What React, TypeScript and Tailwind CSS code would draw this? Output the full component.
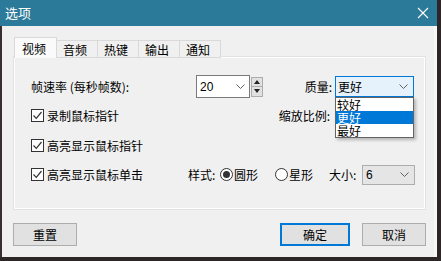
import React from 'react';

const Chevron = () => (
  <svg width="9" height="5" viewBox="0 0 9 5">
    <path d="M0.5 0.5 L4.5 4.5 L8.5 0.5" fill="none" stroke="#606060" strokeWidth="1" />
  </svg>
);

const Check: React.FC<{ label: string }> = ({ label }) => (
  <div className="flex items-center">
    <span className="w-[13px] h-[13px] border border-[#333333] bg-white flex items-center justify-center">
      <svg width="11" height="11" viewBox="0 0 11 11">
        <path d="M1.5 5.5 L4.3 8.3 L9.5 2" fill="none" stroke="#333333" strokeWidth="1.2" />
      </svg>
    </span>
    <span className="ml-[3px]">{label}</span>
  </div>
);

const Radio: React.FC<{ checked?: boolean }> = ({ checked }) => (
  <span className="w-[13px] h-[13px] rounded-full border border-[#333333] bg-white flex items-center justify-center">
    {checked && <span className="w-[7px] h-[7px] rounded-full bg-[#333333]" />}
  </span>
);

const tabs = ['音频', '热键', '输出', '通知'];

export default function App() {
  return (
    <div className="w-[441px] h-[261px] bg-[#2d2626] overflow-hidden font-['Noto_Sans_CJK_SC',sans-serif] text-[12px] leading-[14px] text-black">
      <div className="w-[437px] h-[257px] flex flex-col bg-[#f0f0f0]">
        {/* title bar */}
        <div className="h-[26px] bg-[#2c7a99] flex items-center justify-between pl-[5px] pr-[8px] text-white text-[13px]">
          <span>选项</span>
          <svg width="12" height="12" viewBox="0 0 12 12">
            <path d="M1 1 L11 11 M11 1 L1 11" stroke="white" strokeWidth="1.1" />
          </svg>
        </div>

        <div className="flex-1 flex flex-col border-l-2 border-l-[#3a2d2d] border-r-[3px] border-r-[#f7f7f7]">
          {/* tabs */}
          <div className="flex items-end h-[21px] mt-[11px] ml-[12px] relative z-10">
            <div className="w-[43px] h-[21px] bg-[#fafafa] border border-[#d9d9d9] border-b-0 pl-[7px] pt-[4px]">
              视频
            </div>
            {tabs.map((t) => (
              <div
                key={t}
                className="w-[41px] h-[18px] bg-[#f0f0f0] border border-[#d9d9d9] border-l-0 pl-[6px] pt-[2px]"
              >
                {t}
              </div>
            ))}
          </div>

          {/* panel */}
          <div className="ml-[12px] w-[411px] h-[152px] -mt-px border border-white shadow-[0_0_0_1px_#e2e2e2] bg-[#f0f0f0] pl-[16px] pt-[17px]">
            {/* row 1 */}
            <div className="flex items-center h-[23px]">
              <span className="w-[165px]">帧速率 (每秒帧数):</span>
              <div className="w-[54px] h-[23px] bg-white border border-[#7a7a7a] flex items-center justify-between pl-[3px] pr-[4px]">
                <span className="font-['Liberation_Sans',sans-serif]">20</span>
                <Chevron />
              </div>
              <div className="ml-[1px] w-[12px] h-[20px] flex flex-col">
                <div className="h-[10px] bg-[#e1e1e1] border border-[#adadad] flex items-center justify-center">
                  <svg width="6" height="4" viewBox="0 0 6 4"><path d="M0 4 L3 0 L6 4 Z" fill="#222" /></svg>
                </div>
                <div className="h-[10px] bg-[#e1e1e1] border border-t-0 border-[#adadad] flex items-center justify-center">
                  <svg width="6" height="4" viewBox="0 0 6 4"><path d="M0 0 L3 4 L6 0 Z" fill="#222" /></svg>
                </div>
              </div>
              <span className="w-[72px] text-right pr-[3px]">质量:</span>
              <div className="relative w-[79px] h-[21px] bg-[#e5f1fb] border border-[#0078d7] flex items-center justify-between pl-[2px] pr-[5px]">
                <span>更好</span>
                <Chevron />
                <div className="absolute left-[-1px] top-[20px] w-[79px] bg-white border border-[#646464] shadow-[2px_2px_3px_rgba(0,0,0,0.25)] z-20 text-[12px] leading-[13px]">
                  <div className="h-[13px] pl-[1px]">较好</div>
                  <div className="h-[13px] pl-[1px] bg-[#0078d7] text-white">更好</div>
                  <div className="h-[13px] pl-[1px]">最好</div>
                </div>
              </div>
            </div>

            {/* row 2 */}
            <div className="flex items-center h-[23px] mt-[6px]">
              <div className="w-[304px] flex items-center">
                <Check label="录制鼠标指针" />
                <span className="ml-auto pr-[5px]">缩放比例:</span>
              </div>
            </div>

            {/* row 3 */}
            <div className="flex items-center h-[23px] mt-[7px]">
              <Check label="高亮显示鼠标指针" />
            </div>

            {/* row 4 */}
            <div className="flex items-center h-[23px] mt-[6px]">
              <div className="w-[157px]">
                <Check label="高亮显示鼠标单击" />
              </div>
              <span className="w-[32px]">样式:</span>
              <Radio checked />
              <span className="ml-[1px]">圆形</span>
              <span className="ml-[17px]"><Radio /></span>
              <span className="ml-[1px]">星形</span>
              <span className="ml-[16px] w-[33px]">大小:</span>
              <div className="w-[53px] h-[20px] bg-[#e5e5e5] border border-[#adadad] flex items-center justify-between pl-[3px] pr-[5px]">
                <span className="font-['Liberation_Sans',sans-serif]">6</span>
                <Chevron />
              </div>
            </div>
          </div>

          {/* buttons */}
          <div className="flex items-center mt-[14px] pl-[11px] pr-[8px]">
            <button className="w-[64px] h-[23px] bg-[#e1e1e1] border border-[#adadad]">重置</button>
            <div className="flex-1" />
            <button className="w-[70px] h-[23px] bg-[#e1e1e1] border-2 border-[#0078d7]">确定</button>
            <button className="ml-[12px] w-[64px] h-[23px] bg-[#e1e1e1] border border-[#adadad]">取消</button>
          </div>
        </div>
      </div>
    </div>
  );
}
